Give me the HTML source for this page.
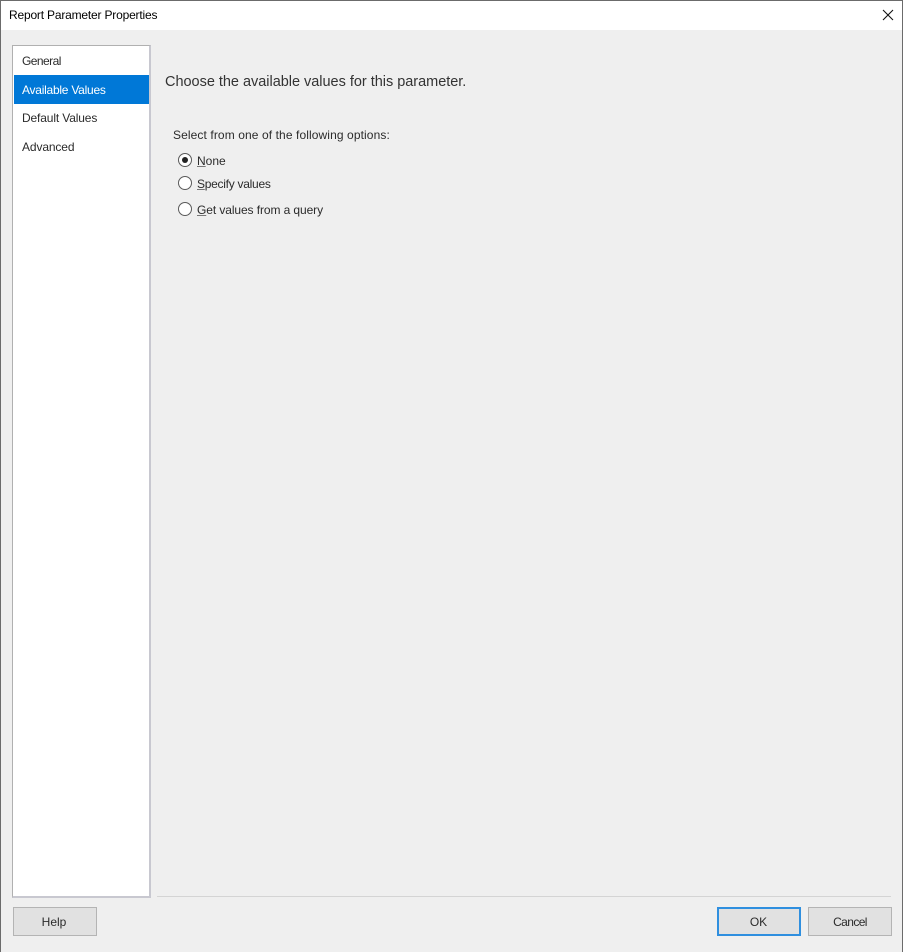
<!DOCTYPE html>
<html><head><meta charset="utf-8"><style>
html,body{margin:0;padding:0;width:904px;height:952px;overflow:hidden;background:#efefef}
body{position:relative;font-family:"Liberation Sans",sans-serif;color:#222}
.a{position:absolute}
.t{position:absolute;white-space:nowrap;font-size:12px;line-height:16px;color:#2b2b2b;filter:blur(.25px)}
.btn{position:absolute;box-sizing:border-box;background:#e1e1e1;border:1px solid #b4b4b4;text-align:center;font-size:12px;line-height:28px;color:#2b2b2b}
.r{position:absolute;box-sizing:border-box;width:14px;height:14px;border:1px solid #5a5a5a;border-radius:50%;background:#fff;filter:blur(.2px)}
u{text-underline-offset:1px;text-decoration-color:#777}
</style></head><body>
<div class="a" style="left:0;top:0;width:904px;height:30px;background:#fff"></div>
<div class="a" style="left:0;top:0;width:904px;height:1px;background:#6b6b6b"></div>
<div class="a" style="left:0;top:0;width:1px;height:952px;background:#6b6b6b"></div>
<div class="a" style="left:902px;top:0;width:1px;height:952px;background:#6b6b6b"></div>
<div class="a" style="left:903px;top:0;width:1px;height:952px;background:#fff"></div>
<div class="t" style="left:9px;top:7px;color:#000;letter-spacing:-.19px">Report Parameter Properties</div>
<svg class="a" style="left:882px;top:9px" width="12" height="12" viewBox="0 0 12 12"><path d="M1 1L11 11M11 1L1 11" stroke="#111" stroke-width="1.1" fill="none"/></svg>

<div class="a" style="box-sizing:border-box;left:12px;top:45px;width:139px;height:853px;background:#fff;border:1px solid #b0b0b0;border-right:2px solid #c8c8d0;border-bottom:2px solid #c8c8d0"></div>
<div class="a" style="left:14px;top:75px;width:135px;height:29px;background:#0078d7"></div>
<div class="t" style="left:22px;top:53px;letter-spacing:-.55px">General</div>
<div class="t" style="left:22px;top:82px;color:#fff;letter-spacing:-.25px">Available Values</div>
<div class="t" style="left:22px;top:110px;letter-spacing:-.14px">Default Values</div>
<div class="t" style="left:22px;top:139px;letter-spacing:-.12px">Advanced</div>

<div class="t" style="left:165px;top:73px;font-size:14.5px;line-height:18px;color:#333;letter-spacing:-.02px">Choose the available values for this parameter.</div>
<div class="t" style="left:173px;top:127px;letter-spacing:.1px">Select from one of the following options:</div>

<div class="r" style="left:178px;top:153px"><div class="a" style="left:3px;top:3px;width:6px;height:6px;border-radius:50%;background:#222"></div></div>
<div class="t" style="left:197px;top:153px"><u>N</u>one</div>
<div class="r" style="left:178px;top:176px"></div>
<div class="t" style="left:197px;top:176px;letter-spacing:-.27px"><u>S</u>pecify values</div>
<div class="r" style="left:178px;top:202px"></div>
<div class="t" style="left:197px;top:202px;letter-spacing:-.09px"><u>G</u>et values from a query</div>

<div class="a" style="left:157px;top:896px;width:734px;height:1px;background:#d4d4d4"></div>
<div class="btn" style="left:13px;top:907px;width:84px;height:29px;padding-right:2px">Help</div>
<div class="btn" style="left:717px;top:907px;width:84px;height:29px;border:2px solid #2f8fdf;line-height:26px;padding-right:1px">OK</div>
<div class="btn" style="left:808px;top:907px;width:84px;height:29px;letter-spacing:-.6px">Cancel</div>
</body></html>
